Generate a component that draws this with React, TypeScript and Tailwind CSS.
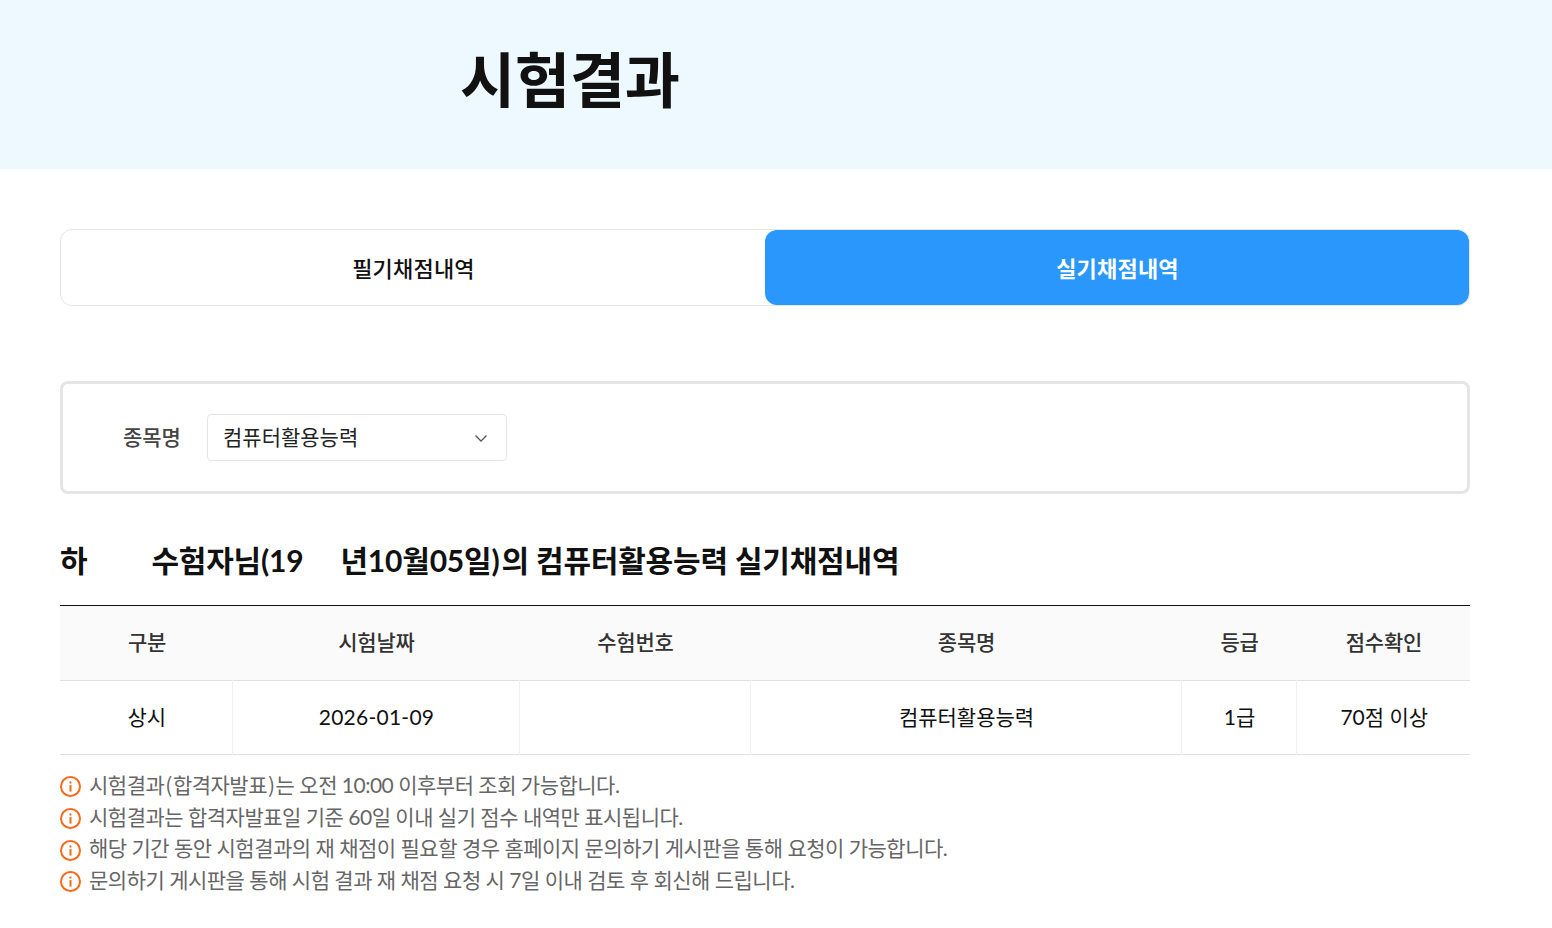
import React from 'react';

const font = { fontFamily: 'Lato, "Noto Sans CJK KR", sans-serif' };

const columns = [
  { label: '구분', width: 'w-[172px]', value: '상시' },
  { label: '시험날짜', width: 'w-[287px]', value: '2026-01-09' },
  { label: '수험번호', width: 'w-[231px]', value: '' },
  { label: '종목명', width: 'w-[431px]', value: '컴퓨터활용능력' },
  { label: '등급', width: 'w-[115px]', value: '1급' },
  { label: '점수확인', width: 'w-[174px]', value: '70점 이상' },
];

function InfoIcon() {
  return (
    <svg width="21" height="21" viewBox="0 0 21 21" fill="none" className="shrink-0 mt-[3px]">
      <circle cx="10.5" cy="10.5" r="9.5" stroke="#f26a1b" strokeWidth="2" />
      <rect x="9.5" y="5.5" width="2" height="2" fill="#f26a1b" />
      <rect x="9.5" y="9" width="2" height="6.6" fill="#f26a1b" />
    </svg>
  );
}

function Paren({ children }: { children: React.ReactNode }) {
  return <span className="font-['Noto_Sans_CJK_KR'] font-normal px-[1px]">{children}</span>;
}

export default function App() {
  const notices = [
    <>시험결과<Paren>(</Paren>합격자발표<Paren>)</Paren>는 오전 10:00 이후부터 조회 가능합니다.</>,
    <>시험결과는 합격자발표일 기준 60일 이내 실기 점수 내역만 표시됩니다.</>,
    <>해당 기간 동안 시험결과의 재 채점이 필요할 경우 홈페이지 문의하기 게시판을 통해 요청이 가능합니다.</>,
    <>문의하기 게시판을 통해 시험 결과 재 채점 요청 시 7일 이내 검토 후 회신해 드립니다.</>,
  ];

  return (
    <div className="min-h-[928px] bg-white" style={font}>
      <div className="h-[169px] bg-[#edf8ff] pl-[460px] pt-[42px]">
        <h1 className="text-[60px] leading-[76px] font-bold tracking-[-0.25px] text-[#111]">시험결과</h1>
      </div>

      <div className="w-[1410px] ml-[60px]">
        {/* Tabs */}
        <div className="mt-[60px] h-[77px] flex border border-[#e5e5e5] rounded-xl">
          <button className="flex-1 pt-[1px] pl-[1px] text-[22px] font-medium tracking-[0.2px] text-[#111]">필기채점내역</button>
          <button className="w-[704px] pt-[1px] pl-[1px] bg-[#2997fb] rounded-xl text-[22px] font-bold tracking-[0.2px] text-white">실기채점내역</button>
        </div>

        {/* Filter */}
        <div className="mt-[75px] h-[113px] flex items-center border-[3px] border-[#e5e5e5] rounded-lg pl-[60px]">
          <span className="w-[84px] pb-[2px] text-[21px] tracking-[-0.1px] font-medium text-[#444]">종목명</span>
          <div className="w-[300px] h-[47px] flex items-center justify-between pl-[15px] pr-[17px] border border-[#e5e5e5] rounded text-[21px] text-[#222]">
            <span className="pb-[2px]">컴퓨터활용능력</span>
            <svg width="16" height="16" viewBox="0 0 16 16" fill="none">
              <path d="M2.5 5.5 8 11l5.5-5.5" stroke="#555" strokeWidth="1.3" />
            </svg>
          </div>
        </div>

        {/* Result title */}
        <h2 className="mt-[46px] h-[41px] leading-[40px] text-[30px] font-bold tracking-[-0.2px] text-[#111] whitespace-nowrap">
          <span>하</span>
          <span className="inline-block w-[64px]" />
          <span>수험자님(19</span>
          <span className="inline-block w-[37px]" />
          <span>년10월05일<span className="pr-[2px]">)</span>의 컴퓨터활용능력 실기채점내역</span>
        </h2>

        {/* Table */}
        <table className="mt-[24px] w-full table-fixed border-t border-[#111]">
          <thead>
            <tr className="h-[75px] bg-[#fafafa] border-b border-[#e0e0e0]">
              {columns.map(c => (
                <th key={c.label} className={`${c.width} pl-[2px] pb-[2px] text-[21px] font-medium tracking-[-0.2px] text-[#333]`}>{c.label}</th>
              ))}
            </tr>
          </thead>
          <tbody>
            <tr className="h-[74px] border-b border-[#e0e0e0]">
              {columns.map((c, i) => (
                <td key={c.label} className={`pl-[2px] pb-[2px] text-center text-[21px] text-[#111] ${i === 1 ? 'tracking-[0.25px]' : ''} ${i < 5 ? 'border-r border-[#f0f0f0]' : ''}`}>{c.value}</td>
              ))}
            </tr>
          </tbody>
        </table>

        {/* Notices */}
        <ul className="mt-[14.4px]">
          {notices.map((n, i) => (
            <li key={i} className="h-[31.67px] flex items-center gap-[8px] text-[21px] tracking-[-0.5px] text-[#666] whitespace-nowrap">
              <InfoIcon />
              <span className="pb-[1px]">{n}</span>
            </li>
          ))}
        </ul>
      </div>
    </div>
  );
}
